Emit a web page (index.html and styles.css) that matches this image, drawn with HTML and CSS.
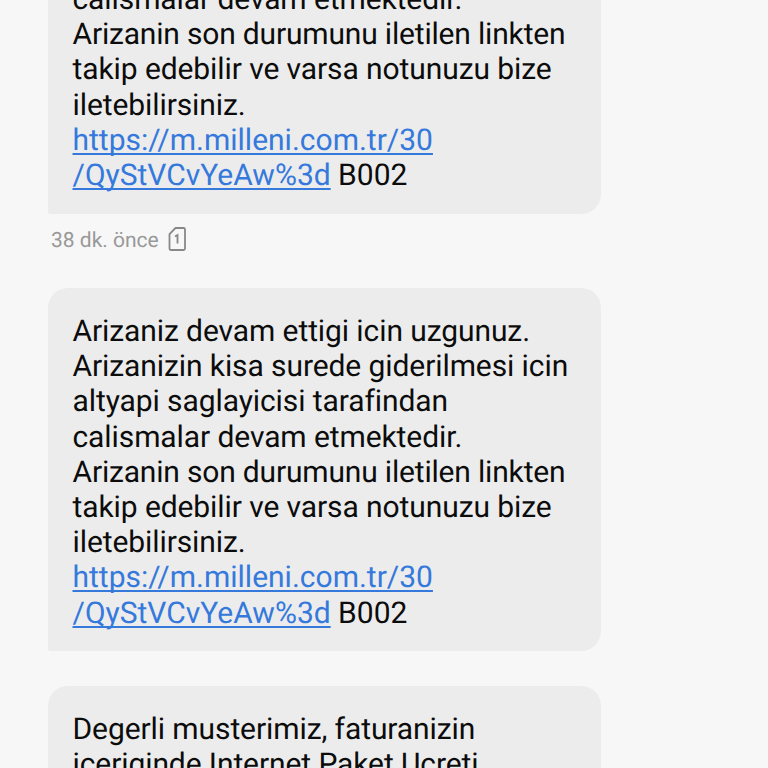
FILE: index.html
```html
<!DOCTYPE html>
<html lang="tr">
<head>
    <meta charset="UTF-8">
    <meta name="viewport" content="width=device-width, initial-scale=1.0">
    <title>Mesajlar</title>
    <link rel="stylesheet" href="styles.css">
</head>
<body>
    <main class="thread">
        <div class="message first">
            calismalar devam etmektedir.<br>
            <span class="tight">Arizanin son durumunu iletilen linkten</span><br>
            takip edebilir ve varsa notunuzu bize<br>
            iletebilirsiniz.<br>
            <span class="link"><a href="#">https://m.milleni.com.tr/30<br>/QyStVCvYeAw%3d</a> B002</span>
        </div>
        <div class="meta">
            <span>38 dk. önce</span>
            <svg class="sim" width="20" height="26" viewBox="0 0 20 26">
                <path d="M7.5 2H15.5Q17 2 17 3.5V22.5Q17 24 15.5 24H3Q1.5 24 1.5 22.5V8Z"/>
                <path d="M7 10.5L9.5 9V17.5"/>
            </svg>
        </div>
        <div class="message">
            Arizaniz devam ettigi icin uzgunuz.<br>
            Arizanizin kisa surede giderilmesi icin<br>
            altyapi saglayicisi tarafindan<br>
            calismalar devam etmektedir.<br>
            <span class="tight">Arizanin son durumunu iletilen linkten</span><br>
            takip edebilir ve varsa notunuzu bize<br>
            iletebilirsiniz.<br>
            <span class="link"><a href="#">https://m.milleni.com.tr/30<br>/QyStVCvYeAw%3d</a> B002</span>
        </div>
        <div class="message last">
            Degerli musterimiz, faturanizin<br>
            iceriginde Internet Paket Ucreti
        </div>
    </main>
</body>
</html>
```

FILE: styles.css
```css
* {
    box-sizing: border-box;
}
body {
    font-family: Roboto, sans-serif;
    margin: 0;
    background-color: #f7f7f7;
    color: #0c0c0c;
    height: 768px;
    overflow: hidden;
    text-rendering: geometricPrecision;
}
.thread {
    display: flex;
    flex-direction: column;
    height: 768px;
    margin-left: 48px;
    width: 553px;
    overflow: hidden;
}
.message {
    flex-shrink: 0;
    background-color: #ececec;
    border-radius: 20px 20px 20px 2px;
    padding: 26px 0 20px 24.5px;
    font-size: 30px;
    line-height: 35.2px;
    letter-spacing: -0.09px;
    white-space: nowrap;
    height: 363px;
}
.tight {
    letter-spacing: -0.18px;
}
.link {
    letter-spacing: 0;
}
.message a {
    color: #3579dc;
    text-decoration: underline;
    text-decoration-thickness: 1.5px;
    text-underline-offset: 3px;
    text-decoration-skip-ink: none;
}
.first {
    display: flow-root;
    height: 214px;
    padding-top: 0;
    border-top-left-radius: 0;
    border-top-right-radius: 0;
}
/* the thread is scrolled, so the first line is partly above the top edge */
.first::before {
    content: "";
    display: block;
    margin-top: -18px;
}
.meta {
    flex-shrink: 0;
    display: flex;
    align-items: center;
    gap: 9px;
    height: 26px;
    margin: 12px 0 36px 3px;
    font-size: 21px;
    color: #999;
}
.meta span {
    padding-top: 3px;
}
.sim {
    fill: none;
    stroke: #888;
    stroke-width: 1.8;
}
.last {
    height: 82px;
    margin-top: 35px;
    padding-bottom: 0;
    border-bottom-left-radius: 0;
    border-bottom-right-radius: 0;
    overflow: hidden;
}
```
